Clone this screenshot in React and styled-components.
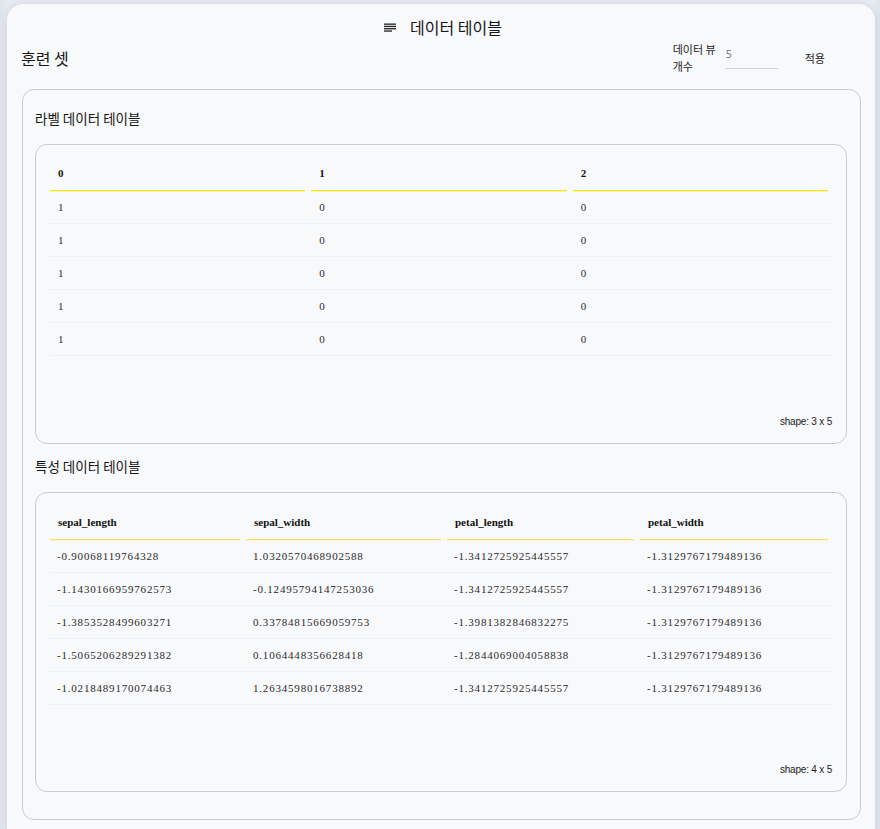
import styled, { createGlobalStyle } from "styled-components";

const GlobalStyle = createGlobalStyle`
  html, body {
    margin: 0;
    padding: 0;
    background: linear-gradient(90deg, #dde2ec 0, #e8ebf2 8px, #e8ebf2 calc(100% - 8px), #dde2ec 100%);
    font-family: "Noto Sans CJK KR", "Noto Sans", sans-serif;
    color: #1c1c1c;
  }
`;

const labelRows = [
  [1, 0, 0],
  [1, 0, 0],
  [1, 0, 0],
  [1, 0, 0],
  [1, 0, 0],
];

const featureCols = ["sepal_length", "sepal_width", "petal_length", "petal_width"];
const featureRows = [
  ["-0.90068119764328", "1.0320570468902588", "-1.3412725925445557", "-1.3129767179489136"],
  ["-1.1430166959762573", "-0.12495794147253036", "-1.3412725925445557", "-1.3129767179489136"],
  ["-1.3853528499603271", "0.33784815669059753", "-1.3981382846832275", "-1.3129767179489136"],
  ["-1.5065206289291382", "0.1064448356628418", "-1.2844069004058838", "-1.3129767179489136"],
  ["-1.0218489170074463", "1.2634598016738892", "-1.3412725925445557", "-1.3129767179489136"],
];

const App = () => {
  return (
    <Page>
      <GlobalStyle />
      <Card>
        <Title>
          <svg width="12" height="9" viewBox="0 0 12 9">
            <rect x="0" y="0.5" width="12" height="1.3" fill="#222" />
            <rect x="0" y="2.8" width="12" height="1.3" fill="#222" />
            <rect x="0" y="5.1" width="12" height="1.3" fill="#222" />
            <rect x="0" y="7.4" width="8" height="1.3" fill="#222" />
          </svg>
          <span>데이터 테이블</span>
        </Title>
        <HeaderRow>
          <SetName>훈련 셋</SetName>
          <Controls>
            <ControlLabel>
              데이터 뷰
              <br />
              개수
            </ControlLabel>
            <CountInput defaultValue="5" />
            <ApplyButton>적용</ApplyButton>
          </Controls>
        </HeaderRow>
        <Section>
          <SectionTitle>라벨 데이터 테이블</SectionTitle>
          <TableCard>
            <Table>
              <HeadRow $cols="1fr 1fr 1fr">
                {[0, 1, 2].map((c) => (
                  <HeadCell key={c}>{c}</HeadCell>
                ))}
              </HeadRow>
              {labelRows.map((r, i) => (
                <BodyRow key={i} $cols="1fr 1fr 1fr">
                  {r.map((v, j) => (
                    <Cell key={j}>{v}</Cell>
                  ))}
                </BodyRow>
              ))}
            </Table>
            <Shape>shape: 3 x 5</Shape>
          </TableCard>
          <SectionTitle $top>특성 데이터 테이블</SectionTitle>
          <TableCard>
            <Table>
              <HeadRow $cols="190fr 195fr 187fr 188fr">
                {featureCols.map((c) => (
                  <SoftHeadCell key={c}>{c}</SoftHeadCell>
                ))}
              </HeadRow>
              {featureRows.map((r, i) => (
                <BodyRow key={i} $cols="190fr 195fr 187fr 188fr">
                  {r.map((v, j) => (
                    <Cell key={j} $wide>
                      {v}
                    </Cell>
                  ))}
                </BodyRow>
              ))}
            </Table>
            <Shape>shape: 4 x 5</Shape>
          </TableCard>
        </Section>
      </Card>
    </Page>
  );
};

const Page = styled.div`
  padding: 4px 5px 0 7px;
  min-height: 825px;
`;

const Card = styled.div`
  background: #f8f9fb;
  border-radius: 16px 16px 0 0;
  box-shadow: 0 0 6px rgba(120, 135, 170, 0.25);
  padding: 8px 14px 8px 14px;
  min-height: 830px;
  box-sizing: border-box;
`;

const Title = styled.div`
  display: flex;
  align-items: center;
  justify-content: center;
  gap: 14px;
  height: 29px;
  font-size: 16px;
  color: #151515;
  padding-left: 4px;
  svg {
    margin-top: 1px;
  }
`;

const HeaderRow = styled.div`
  display: flex;
  justify-content: space-between;
  align-items: center;
  height: 34px;
  margin-bottom: 14px;
`;

const SetName = styled.h2`
  margin: 0;
  font-size: 16px;
  font-weight: 400;
  color: #151515;
`;

const Controls = styled.div`
  display: flex;
  align-items: center;
`;

const ControlLabel = styled.div`
  font-size: 11px;
  line-height: 17px;
  white-space: nowrap;
  width: 44px;
  margin-right: 8px;
  color: #222;
`;

const CountInput = styled.input`
  width: 53px;
  box-sizing: border-box;
  border: none;
  border-bottom: 1px solid #c9d2e0;
  background: transparent;
  font-family: "Noto Sans", sans-serif;
  font-size: 10.5px;
  color: #777;
  padding: 0 1px 7px;
  margin-top: 0;
  outline: none;
`;

const ApplyButton = styled.button`
  border: none;
  background: transparent;
  font-family: "Noto Sans CJK KR", sans-serif;
  font-size: 11px;
  color: #222;
  padding: 0 36px 0 27px;
  cursor: pointer;
`;

const Section = styled.div`
  margin-left: 1px;
  border: 1px solid #c9cbd1;
  border-radius: 12px;
  padding: 16px 13px 27px 12px;
`;

const SectionTitle = styled.h3`
  margin: ${(p) => (p.$top ? "10px" : "0")} 0 14px;
  font-size: 13.5px;
  line-height: 24px;
  font-weight: 400;
  color: #151515;
`;

const TableCard = styled.div`
  height: 300px;
  box-sizing: border-box;
  border: 1px solid #c9cbd1;
  border-radius: 12px;
  padding: 14px 14px 14px 14px;
  display: flex;
  flex-direction: column;
`;

const Table = styled.div`
  font-family: "Liberation Serif", serif;
  font-size: 11px;
  color: #2a2a2a;
`;

const HeadRow = styled.div`
  display: grid;
  grid-template-columns: ${(p) => p.$cols};
  column-gap: 6px;
  padding-right: 4px;
`;

const BodyRow = styled(HeadRow)`
  border-bottom: 1px solid #edf0f5;
`;

const HeadCell = styled.div`
  height: 31px;
  line-height: 29px;
  padding-left: 8px;
  font-weight: 700;
  color: #111;
  border-bottom: 1px solid #ffe400;
  box-shadow: 0 1px 0 rgba(255, 228, 0, 0.25);
`;

const SoftHeadCell = styled(HeadCell)`
  height: 32px;
  line-height: 31px;
  border-bottom-color: #fbe35a;
  box-shadow: 0 1px 0 rgba(251, 227, 90, 0.25);
`;

const Cell = styled.div`
  height: 32px;
  line-height: 32px;
  padding-left: ${(p) => (p.$wide ? "7px" : "8px")};
  letter-spacing: ${(p) => (p.$wide ? "0.8px" : "0")};
  color: #2a2a2a;
`;

const Shape = styled.div`
  margin-top: auto;
  align-self: flex-end;
  font-family: "Liberation Sans", sans-serif;
  font-size: 10px;
  line-height: 14px;
  color: #222;
  letter-spacing: -0.2px;
`;

export default App;
